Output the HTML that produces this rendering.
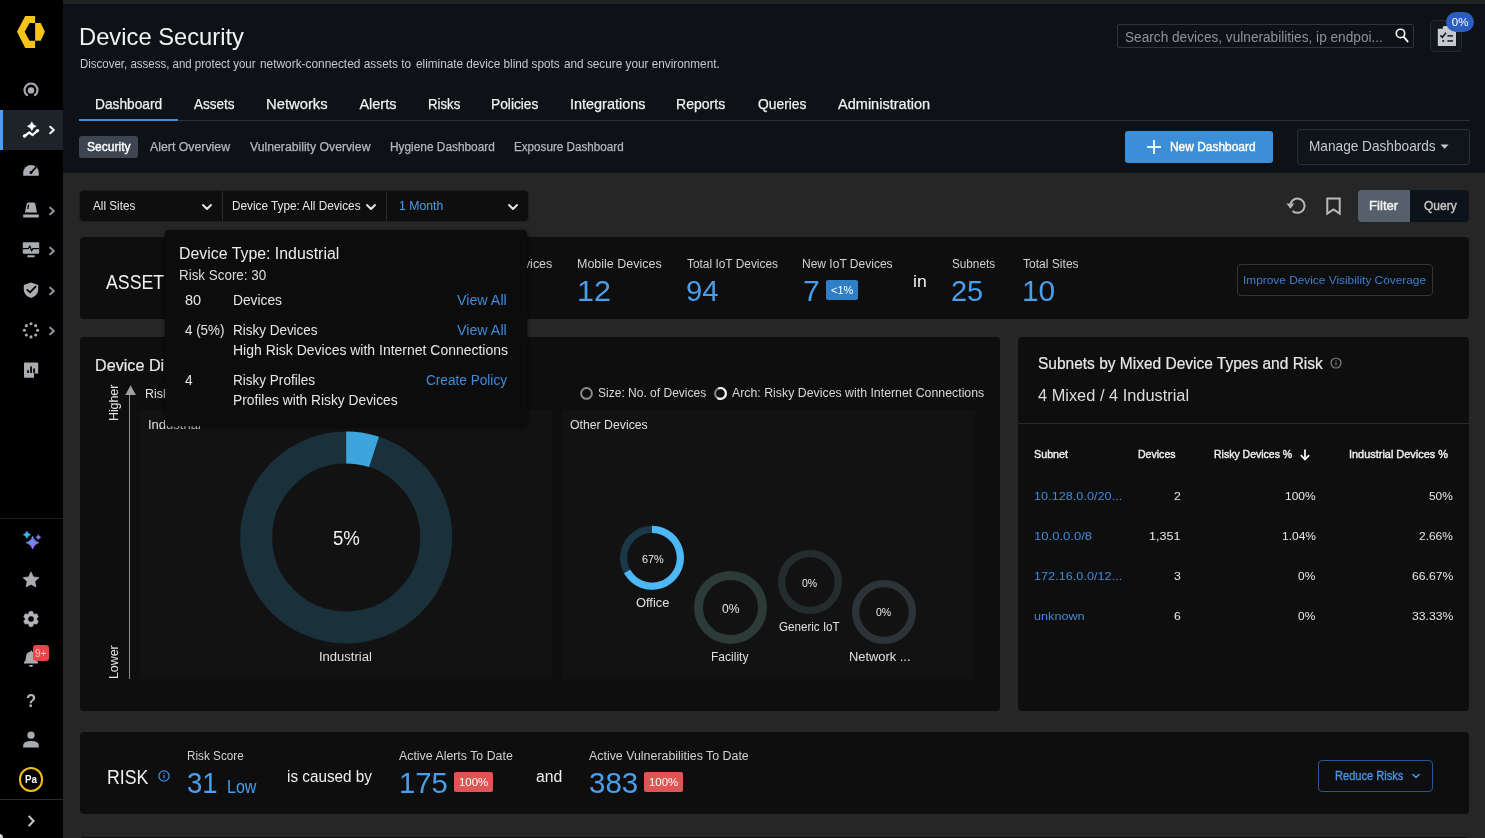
<!DOCTYPE html>
<html><head><meta charset="utf-8"><title>Device Security</title>
<style>
html,body{margin:0;padding:0;}
body{width:1485px;height:838px;overflow:hidden;background:#262626;font-family:"Liberation Sans",sans-serif;position:relative;}
.t{position:absolute;white-space:nowrap;line-height:1;display:block;transform-origin:0 0;}
.abs{position:absolute;}
.card{position:absolute;background:#0e0e0e;border-radius:4px;}
svg{position:absolute;overflow:visible;}
</style></head><body><div id="root" style="position:absolute;left:0;top:0;width:1485px;height:838px;will-change:transform">
<div class="abs" style="left:63px;top:0;width:1422px;height:4px;background:#222222"></div>
<div class="abs" style="left:63px;top:4px;width:1422px;height:169px;background:#0e1216"></div>
<div class="abs" style="left:0;top:0;width:63px;height:838px;background:#000"></div>
<div class="abs" style="left:0;top:110px;width:63px;height:40px;background:#1d2329"></div>
<div class="abs" style="left:0;top:110px;width:3px;height:40px;background:#4a9df8"></div>
<div class="abs" style="left:0;top:518px;width:63px;height:1px;background:#1f1f1f"></div>
<div class="abs" style="left:0;top:799px;width:63px;height:1px;background:#2a2a2a"></div>
<svg style="left:0;top:0" width="63" height="60" viewBox="0 0 63 60">
<polygon points="25.2,16 35.1,16 35.1,23 29.5,23 24.7,31.7 29.5,40.7 35.1,40.7 35.1,48 25.2,48 17,31.7" fill="#f4c417"/>
<polygon points="35.1,23 40.7,23 44.9,31.7 40.7,40.7 35.1,40.7" fill="#f4c417"/>
</svg>
<svg style="left:21px;top:80px" width="20" height="20" viewBox="-10 -10 20 20">
<path d="M -3.9 5.2 A 6.5 6.5 0 1 1 3.9 5.2" fill="none" stroke="#a9adb2" stroke-width="2.1" stroke-linecap="round"/>
<circle cx="0" cy="0.4" r="3.2" fill="#a9adb2"/></svg>
<svg style="left:19px;top:118px" width="24" height="24" viewBox="19 118 24 24">
<polyline points="24.6,136 29.3,132.5 32.6,135 37.5,130.6" fill="none" stroke="#fff" stroke-width="2.2" stroke-linecap="round" stroke-linejoin="round"/><circle cx="24.6" cy="136" r="1.8" fill="#fff"/><circle cx="37.5" cy="130.6" r="1.7" fill="#fff"/>
<path d="M31.80 121.70 Q32.79 125.21 36.30 126.20 Q32.79 127.19 31.80 130.70 Q30.81 127.19 27.30 126.20 Q30.81 125.21 31.80 121.70 Z" fill="#fff" stroke="#fff" stroke-width="0.5" stroke-linejoin="round"/>
</svg>
<svg style="left:46.1px;top:123.4px" width="12" height="14" viewBox="-6 -7 12 14"><polyline points="-1.81,-3.22 1.81,0 -1.81,3.22" fill="none" stroke="#f0f0f0" stroke-width="2.1" stroke-linecap="round" stroke-linejoin="round"/></svg>
<svg style="left:21px;top:161px" width="20" height="20" viewBox="21 161 20 20">
<path d="M23.2 175.8 L23.2 172.8 A 7.8 7.8 0 0 1 38.8 172.8 L38.8 175.8 Z" fill="#a9adb2"/>
<line x1="31" y1="172.6" x2="35.6" y2="167.6" stroke="#000" stroke-width="1.6" stroke-linecap="round"/>
<circle cx="31" cy="172.6" r="1.5" fill="#000"/>
</svg>
<svg style="left:21px;top:200px" width="20" height="20" viewBox="21 200 20 20">
<path d="M25 212.6 L26.6 204 Q26.9 202.4 28.5 202.4 L33.5 202.4 Q35.1 202.4 35.4 204 L37 212.6 Z" fill="#a9adb2"/>
<rect x="23.2" y="214.6" width="15.6" height="2.9" rx="0.6" fill="#a9adb2"/>
<line x1="28.6" y1="204.6" x2="27.8" y2="209" stroke="#000" stroke-width="1.3"/>
</svg>
<svg style="left:46.1px;top:203.5px" width="12" height="14" viewBox="-6 -7 12 14"><polyline points="-1.81,-3.22 1.81,0 -1.81,3.22" fill="none" stroke="#8f9398" stroke-width="2.1" stroke-linecap="round" stroke-linejoin="round"/></svg>
<svg style="left:21px;top:240px" width="20" height="20" viewBox="21 240 20 20">
<rect x="22.8" y="242.3" width="16.4" height="11.4" rx="1" fill="#a9adb2"/>
<rect x="27.4" y="255.2" width="7.2" height="2" rx="0.5" fill="#a9adb2"/>
<polyline points="23,248.6 28.5,248.6 29.8,246 31.6,251 32.8,248.6 39,248.6" fill="none" stroke="#000" stroke-width="1.2" stroke-linejoin="round"/>
</svg>
<svg style="left:46.1px;top:243.5px" width="12" height="14" viewBox="-6 -7 12 14"><polyline points="-1.81,-3.22 1.81,0 -1.81,3.22" fill="none" stroke="#8f9398" stroke-width="2.1" stroke-linecap="round" stroke-linejoin="round"/></svg>
<svg style="left:21px;top:280px" width="20" height="20" viewBox="21 280 20 20">
<path d="M31 282.4 L38.2 285 L38.2 290 Q38.2 295.2 31 297.9 Q23.8 295.2 23.8 290 L23.8 285 Z" fill="#a9adb2"/>
<polyline points="27.3,289.8 30,292.4 35.6,286.6" fill="none" stroke="#000" stroke-width="1.7" stroke-linecap="round" stroke-linejoin="round"/>
</svg>
<svg style="left:46.1px;top:283.5px" width="12" height="14" viewBox="-6 -7 12 14"><polyline points="-1.81,-3.22 1.81,0 -1.81,3.22" fill="none" stroke="#8f9398" stroke-width="2.1" stroke-linecap="round" stroke-linejoin="round"/></svg>
<svg style="left:21px;top:320px" width="20" height="20" viewBox="21 320 20 20"><circle cx="31.00" cy="323.70" r="1.55" fill="#a9adb2"/><circle cx="35.67" cy="325.63" r="1.55" fill="#a9adb2"/><circle cx="37.60" cy="330.30" r="1.55" fill="#a9adb2"/><circle cx="35.67" cy="334.97" r="1.55" fill="#a9adb2"/><circle cx="31.00" cy="336.90" r="1.55" fill="#a9adb2"/><circle cx="26.33" cy="334.97" r="1.55" fill="#a9adb2"/><circle cx="24.40" cy="330.30" r="1.55" fill="#a9adb2"/><circle cx="26.33" cy="325.63" r="1.55" fill="#a9adb2"/></svg>
<svg style="left:46.1px;top:323.5px" width="12" height="14" viewBox="-6 -7 12 14"><polyline points="-1.81,-3.22 1.81,0 -1.81,3.22" fill="none" stroke="#8f9398" stroke-width="2.1" stroke-linecap="round" stroke-linejoin="round"/></svg>
<svg style="left:21px;top:360px" width="20" height="20" viewBox="21 360 20 20">
<path d="M25 362.4 L37.2 362.4 Q38.2 362.4 38.2 363.4 L38.2 373.4 L34 373.4 L34 377.8 L25 377.8 Q24 377.8 24 376.8 L24 363.4 Q24 362.4 25 362.4 Z" fill="#a9adb2"/>
<rect x="27.2" y="370.2" width="1.7" height="2.8" fill="#000"/>
<rect x="30.2" y="366.4" width="1.7" height="6.6" fill="#000"/>
<rect x="33.2" y="368.4" width="1.7" height="4.6" fill="#000"/>
</svg>
<svg style="left:19px;top:527px" width="26" height="26" viewBox="19 527 26 26">
<defs><linearGradient id="sg" x1="0" y1="0" x2="0.6" y2="1"><stop offset="0" stop-color="#4aa8f5"/><stop offset="1" stop-color="#9a6af2"/></linearGradient></defs>
<path d="M32.60 536.20 Q33.90 541.40 39.10 542.70 Q33.90 544.00 32.60 549.20 Q31.30 544.00 26.10 542.70 Q31.30 541.40 32.60 536.20 Z" fill="url(#sg)" stroke="url(#sg)" stroke-width="0.6" stroke-linejoin="round"/>
<path d="M26.90 531.10 Q27.64 534.06 30.60 534.80 Q27.64 535.54 26.90 538.50 Q26.16 535.54 23.20 534.80 Q26.16 534.06 26.90 531.10 Z" fill="#3db6f2" stroke="#3db6f2" stroke-width="0.5" stroke-linejoin="round"/>
<path d="M38.40 534.60 Q38.92 536.68 41.00 537.20 Q38.92 537.72 38.40 539.80 Q37.88 537.72 35.80 537.20 Q37.88 536.68 38.40 534.60 Z" fill="#8b7df2" stroke="#8b7df2" stroke-width="0.4" stroke-linejoin="round"/>
</svg>
<svg style="left:21px;top:570px" width="20" height="20" viewBox="21 570 20 20"><polygon points="31.00,571.90 33.35,576.96 38.89,577.64 34.80,581.44 35.88,586.91 31.00,584.20 26.12,586.91 27.20,581.44 23.11,577.64 28.65,576.96" fill="#a9adb2" stroke="#a9adb2" stroke-width="0.8" stroke-linejoin="round"/></svg>
<svg style="left:21px;top:609px" width="20" height="20" viewBox="21 609 20 20"><polygon points="29.45,611.36 32.55,611.36 33.80,614.15 36.85,613.84 38.40,616.52 36.60,619.00 38.40,621.48 36.85,624.16 33.80,623.85 32.55,626.64 29.45,626.64 28.20,623.85 25.15,624.16 23.60,621.48 25.40,619.00 23.60,616.52 25.15,613.84 28.20,614.15" fill="#b0b4b9" stroke="#b0b4b9" stroke-width="0.4" stroke-linejoin="round"/><circle cx="31" cy="619" r="2.8" fill="#000"/></svg>
<svg style="left:19.7px;top:646.6px" width="22" height="24" viewBox="20 648 22 24">
<path d="M24 664.6 L24 663.6 Q26 662 26 658 Q26 653.6 30.6 652.6 L30.6 651.8 L32 651.8 L32 652.6 Q36 653.6 36 658 Q36 662 38 663.6 L38 664.6 Z" fill="#a9adb2"/>
<path d="M29 666 L33 666 Q33 668 31 668 Q29 668 29 666 Z" fill="#a9adb2"/>
</svg>
<div class="abs" style="left:33.1px;top:645.1px;width:15.5px;height:15.9px;border-radius:3px;background:#e7474b"></div>
<span class="t" style="left:35.30px;top:648px;font-size:10.5px;color:#f6c4c5;transform:scaleX(0.9629);">9+</span>
<span class="t" style="left:25.90px;top:691px;font-size:19px;color:#b2b4b7;font-weight:700;transform:scaleX(0.8727);">?</span>
<svg style="left:21px;top:730px" width="20" height="20" viewBox="21 730 20 20">
<circle cx="31" cy="735.2" r="3.6" fill="#a9adb2"/>
<path d="M23.2 747.6 L23.2 745.6 Q23.2 741 31 741 Q38.8 741 38.8 745.6 L38.8 747.6 Z" fill="#a9adb2"/></svg>
<div class="abs" style="left:19.1px;top:767.3px;width:20.4px;height:20.4px;border-radius:50%;border:2px solid #f0bf12"></div>
<span class="t" style="left:24.85px;top:774px;font-size:11.5px;color:#fff;font-weight:700;transform:scaleX(0.8521);">Pa</span>
<svg style="left:25.3px;top:813.6px" width="12" height="14" viewBox="-6 -7 12 14"><polyline points="-2.3,-5.1 2.5,0 -2.3,5.1" fill="none" stroke="#c4c6c9" stroke-width="2.1" stroke-linecap="butt" stroke-linejoin="miter"/></svg>
<div class="abs" style="left:-4px;top:834px;width:7px;height:8px;border-radius:50%;background:#d4d8dc"></div>
<span class="t" style="left:78.61px;top:25px;font-size:24px;color:#f2f2f2;transform:scaleX(0.9896);">Device Security</span>
<span class="t" style="left:80.00px;top:58px;font-size:12px;color:#c6c9cd;transform:scaleX(0.9568);">Discover, assess, and protect your</span>
<span class="t" style="left:259.70px;top:58px;font-size:12px;color:#c6c9cd;transform:scaleX(0.9897);">network-connected assets to</span>
<span class="t" style="left:415.50px;top:58px;font-size:12px;color:#c6c9cd;transform:scaleX(0.9792);">eliminate device blind spots</span>
<span class="t" style="left:563.50px;top:58px;font-size:12px;color:#c6c9cd;transform:scaleX(0.9809);">and secure your environment.</span>
<div class="abs" style="left:79px;top:120px;width:1391px;height:1px;background:#2b3139"></div>
<div class="abs" style="left:79px;top:118.5px;width:99px;height:2.5px;background:#3b8de0"></div>
<span class="t" style="left:94.65px;top:97px;font-size:14.5px;color:#f0f0f0;-webkit-text-stroke:0.25px #f0f0f0;transform:scaleX(0.9475);">Dashboard</span>
<span class="t" style="left:194.00px;top:97px;font-size:14.5px;color:#f0f0f0;-webkit-text-stroke:0.25px #f0f0f0;transform:scaleX(0.9338);">Assets</span>
<span class="t" style="left:265.98px;top:97px;font-size:14.5px;color:#f0f0f0;-webkit-text-stroke:0.25px #f0f0f0;transform:scaleX(1.0206);">Networks</span>
<span class="t" style="left:359.40px;top:97px;font-size:14.5px;color:#f0f0f0;-webkit-text-stroke:0.25px #f0f0f0;">Alerts</span>
<span class="t" style="left:427.69px;top:97px;font-size:14.5px;color:#f0f0f0;-webkit-text-stroke:0.25px #f0f0f0;transform:scaleX(0.9125);">Risks</span>
<span class="t" style="left:491.45px;top:97px;font-size:14.5px;color:#f0f0f0;-webkit-text-stroke:0.25px #f0f0f0;transform:scaleX(0.9484);">Policies</span>
<span class="t" style="left:570.00px;top:97px;font-size:14.5px;color:#f0f0f0;-webkit-text-stroke:0.25px #f0f0f0;transform:scaleX(0.9957);">Integrations</span>
<span class="t" style="left:676.43px;top:97px;font-size:14.5px;color:#f0f0f0;-webkit-text-stroke:0.25px #f0f0f0;transform:scaleX(0.9693);">Reports</span>
<span class="t" style="left:757.60px;top:97px;font-size:14.5px;color:#f0f0f0;-webkit-text-stroke:0.25px #f0f0f0;transform:scaleX(0.9541);">Queries</span>
<span class="t" style="left:838.00px;top:97px;font-size:14.5px;color:#f0f0f0;-webkit-text-stroke:0.25px #f0f0f0;transform:scaleX(1.0021);">Administration</span>
<div class="abs" style="left:79px;top:136px;width:59px;height:22px;border-radius:3px;background:#3d4650"></div>
<span class="t" style="left:86.60px;top:141px;font-size:12px;color:#fff;-webkit-text-stroke:0.4px #fff;transform:scaleX(1.0035);">Security</span>
<span class="t" style="left:149.80px;top:141px;font-size:12px;color:#b4b8bd;-webkit-text-stroke:0.25px #b4b8bd;transform:scaleX(1.0261);">Alert Overview</span>
<span class="t" style="left:249.60px;top:141px;font-size:12px;color:#b4b8bd;-webkit-text-stroke:0.25px #b4b8bd;transform:scaleX(1.0186);">Vulnerability Overview</span>
<span class="t" style="left:390.00px;top:141px;font-size:12px;color:#b4b8bd;-webkit-text-stroke:0.25px #b4b8bd;transform:scaleX(0.9887);">Hygiene Dashboard</span>
<span class="t" style="left:514.00px;top:141px;font-size:12px;color:#b4b8bd;-webkit-text-stroke:0.25px #b4b8bd;transform:scaleX(0.9727);">Exposure Dashboard</span>
<div class="abs" style="left:1117px;top:24px;width:295px;height:22px;border:1px solid #30353b;border-radius:2px;background:#0e1216"></div>
<span class="t" style="left:1124.60px;top:30px;font-size:14px;color:#8d9399;transform:scaleX(0.9746);">Search devices, vulnerabilities, ip endpoi...</span>
<svg style="left:1393px;top:27px" width="18" height="18" viewBox="1393 27 18 18">
<circle cx="1400.5" cy="33.4" r="4.2" fill="none" stroke="#f4f4f4" stroke-width="1.6"/>
<line x1="1403.8" y1="36.8" x2="1407.6" y2="41.4" stroke="#f4f4f4" stroke-width="1.9" stroke-linecap="round"/></svg>
<div class="abs" style="left:1430px;top:20.2px;width:30px;height:29.6px;border:1px solid #262b32;border-radius:4px;background:#12171d"></div>
<svg style="left:1436px;top:24px" width="22" height="24" viewBox="1436 24 22 24">
<path d="M1438.4 28.7 L1442.6 28.7 L1443.4 26 L1450.4 26 L1451.2 28.7 L1455.4 28.7 Q1456 28.7 1456 29.3 L1456 45.4 Q1456 46 1455.4 46 L1438.4 46 Q1437.8 46 1437.8 45.4 L1437.8 29.3 Q1437.8 28.7 1438.4 28.7 Z" fill="#c6c9cd"/>
<polyline points="1440.4,35.4 1442.3,37.3 1446,32.8" fill="none" stroke="#12171d" stroke-width="1.5"/>
<circle cx="1443.2" cy="41" r="1.05" fill="#12171d"/>
<rect x="1447.4" y="35.1" width="5.6" height="1.5" fill="#12171d"/>
<rect x="1447.4" y="40.2" width="5.6" height="1.5" fill="#12171d"/>
</svg>
<div class="abs" style="left:1446px;top:11.9px;width:28px;height:20.3px;border-radius:10.2px;background:#295ec0"></div>
<span class="t" style="left:1451.80px;top:17px;font-size:11.5px;color:#fff;">0%</span>
<div class="abs" style="left:1125px;top:131px;width:148px;height:32px;border-radius:3px;background:#3b8fd8"></div>
<svg style="left:1145px;top:138px" width="18" height="18" viewBox="1145 138 18 18">
<line x1="1147" y1="147" x2="1161" y2="147" stroke="#fff" stroke-width="1.8"/><line x1="1154" y1="140" x2="1154" y2="154" stroke="#fff" stroke-width="1.8"/></svg>
<span class="t" style="left:1169.85px;top:141px;font-size:12.5px;color:#fff;-webkit-text-stroke:0.4px #fff;transform:scaleX(0.9540);">New Dashboard</span>
<div class="abs" style="left:1297px;top:129px;width:171px;height:34px;border:1px solid #2a3038;border-radius:3px;background:#10151b"></div>
<span class="t" style="left:1308.66px;top:139px;font-size:14.5px;color:#c6c9cd;transform:scaleX(0.9410);">Manage Dashboards</span>
<svg style="left:1440px;top:143.5px" width="10" height="6" viewBox="0 0 10 6"><polygon points="0.6,0.6 8.6,0.6 4.6,4.8" fill="#c6c9cd"/></svg>
<div class="abs" style="left:79.5px;top:190.5px;width:448.5px;height:30.5px;border-radius:4px;background:#0e0e0e;box-shadow:0 0 0 1px #1d1d1d"></div>
<div class="abs" style="left:222px;top:191px;width:1px;height:30px;background:#2a2a2a"></div>
<div class="abs" style="left:386px;top:191px;width:1px;height:30px;background:#2a2a2a"></div>
<span class="t" style="left:93.00px;top:200px;font-size:12.5px;color:#e8e8e8;transform:scaleX(0.9353);">All Sites</span>
<span class="t" style="left:231.86px;top:200px;font-size:12.5px;color:#e8e8e8;transform:scaleX(0.9406);">Device Type: All Devices</span>
<span class="t" style="left:399.40px;top:200px;font-size:12.5px;color:#4a9eea;transform:scaleX(0.9820);">1 Month</span>
<svg style="left:201px;top:203px" width="12" height="8" viewBox="-6 -4 12 8"><polyline points="-4,-2 0,2 4,-2" fill="none" stroke="#e8e8e8" stroke-width="1.9" stroke-linecap="round" stroke-linejoin="round"/></svg>
<svg style="left:365.4px;top:203px" width="12" height="8" viewBox="-6 -4 12 8"><polyline points="-4,-2 0,2 4,-2" fill="none" stroke="#e8e8e8" stroke-width="1.9" stroke-linecap="round" stroke-linejoin="round"/></svg>
<svg style="left:507px;top:203px" width="12" height="8" viewBox="-6 -4 12 8"><polyline points="-4,-2 0,2 4,-2" fill="none" stroke="#e8e8e8" stroke-width="1.9" stroke-linecap="round" stroke-linejoin="round"/></svg>
<svg style="left:1283px;top:193px" width="26" height="26" viewBox="1283 193 26 26">
<path d="M1290.4 206.6 A 7.1 7.1 0 1 1 1292.6 210.9" fill="none" stroke="#b6b6b6" stroke-width="2" stroke-linecap="butt"/>
<polygon points="1286.4,203.6 1294.4,203.6 1290.4,208.8" fill="#b6b6b6"/></svg>
<svg style="left:1323px;top:194px" width="20" height="24" viewBox="1323 194 20 24">
<path d="M1327.3 198.5 L1339.7 198.5 L1339.7 213.6 L1333.5 209.4 L1327.3 213.6 Z" fill="none" stroke="#bababa" stroke-width="2" stroke-linejoin="miter"/></svg>
<div class="abs" style="left:1358px;top:190px;width:52.2px;height:32px;border-radius:4px 0 0 4px;background:#55606c"></div>
<div class="abs" style="left:1410.2px;top:190px;width:58.4px;height:32px;border-radius:0 4px 4px 0;background:#0d131a"></div>
<span class="t" style="left:1369.35px;top:200px;font-size:12.5px;color:#f4f4f4;-webkit-text-stroke:0.4px #f4f4f4;transform:scaleX(1.0521);">Filter</span>
<span class="t" style="left:1423.60px;top:200px;font-size:12.5px;color:#c6c6c6;-webkit-text-stroke:0.4px #c6c6c6;transform:scaleX(0.9601);">Query</span>
<div class="card" style="left:80px;top:237px;width:1389px;height:82px"></div>
<span class="t" style="left:106.00px;top:272px;font-size:20px;color:#f0f0f0;transform:scaleX(0.8874);">ASSET</span>
<span class="t" style="left:508.40px;top:258px;font-size:12.5px;color:#d2d2d2;transform:scaleX(0.9952);">Devices</span>
<span class="t" style="left:577.00px;top:258px;font-size:12.5px;color:#d2d2d2;transform:scaleX(0.9988);">Mobile Devices</span>
<span class="t" style="left:576.70px;top:277px;font-size:29px;color:#4a9eea;transform:scaleX(1.0505);">12</span>
<span class="t" style="left:686.60px;top:258px;font-size:12.5px;color:#d2d2d2;transform:scaleX(0.9517);">Total IoT Devices</span>
<span class="t" style="left:686.39px;top:277px;font-size:29px;color:#4a9eea;transform:scaleX(1.0087);">94</span>
<span class="t" style="left:802.44px;top:258px;font-size:12.5px;color:#d2d2d2;transform:scaleX(0.9612);">New IoT Devices</span>
<span class="t" style="left:803.16px;top:277px;font-size:29px;color:#4a9eea;transform:scaleX(1.0429);">7</span>
<div class="abs" style="left:826px;top:280px;width:32px;height:20px;border-radius:2px;background:#2f7fc6"></div>
<span class="t" style="left:831.20px;top:285px;font-size:11.5px;color:#fff;transform:scaleX(0.9519);">&lt;1%</span>
<span class="t" style="left:912.90px;top:274px;font-size:16px;color:#f0f0f0;transform:scaleX(1.0990);">in</span>
<span class="t" style="left:951.60px;top:258px;font-size:12.5px;color:#d2d2d2;transform:scaleX(0.9382);">Subnets</span>
<span class="t" style="left:951.40px;top:277px;font-size:29px;color:#4a9eea;transform:scaleX(0.9957);">25</span>
<span class="t" style="left:1023.00px;top:258px;font-size:12.5px;color:#d2d2d2;transform:scaleX(0.9649);">Total Sites</span>
<span class="t" style="left:1021.74px;top:277px;font-size:29px;color:#4a9eea;transform:scaleX(1.0299);">10</span>
<div class="abs" style="left:1237px;top:264px;width:193.5px;height:29.5px;border:1px solid #333639;border-radius:4px"></div>
<span class="t" style="left:1242.87px;top:275px;font-size:11.5px;color:#3b7ed2;transform:scaleX(1.0314);">Improve Device Visibility Coverage</span>
<div class="card" style="left:80px;top:337px;width:920px;height:374px"></div>
<span class="t" style="left:95.39px;top:358px;font-size:16px;color:#e8e8e8;-webkit-text-stroke:0.2px #e8e8e8;transform:scaleX(1.0104);">Device Di</span>
<span class="t" style="left:165.40px;top:358px;font-size:16px;color:#e8e8e8;transform:scaleX(0.9840);">stribution</span>
<div class="abs" style="left:129.2px;top:392px;width:1px;height:287px;background:#8c8c8c"></div>
<svg style="left:124.6px;top:384.8px" width="12" height="11" viewBox="0 0 12 11"><polygon points="5.6,0.2 10.9,10 0.3,10" fill="#a0a0a0"/></svg>
<span class="t" style="left:144.60px;top:388px;font-size:12.5px;color:#e0e0e0;transform:scaleX(0.9977);">Risk</span>
<div class="abs" style="left:108.2px;top:420.6px;width:36px;height:12px;transform-origin:0 0;transform:rotate(-90deg);font-size:12.5px;line-height:12px;color:#e4e4e4;white-space:nowrap;letter-spacing:-0.1px">Higher</div>
<div class="abs" style="left:108.2px;top:678.6px;width:34px;height:12px;transform-origin:0 0;transform:rotate(-90deg);font-size:12.5px;line-height:12px;color:#e4e4e4;white-space:nowrap;letter-spacing:-0.1px">Lower</div>
<div class="abs" style="left:140.3px;top:409.8px;width:412px;height:268.8px;background:#121212"></div>
<div class="abs" style="left:562.3px;top:409.8px;width:412.3px;height:268.8px;background:#121212"></div>
<span class="t" style="left:147.76px;top:419px;font-size:12.5px;color:#e0e0e0;transform:scaleX(1.0420);">Industrial</span>
<span class="t" style="left:570.00px;top:419px;font-size:12.5px;color:#e0e0e0;transform:scaleX(0.9817);">Other Devices</span>
<svg style="left:579px;top:386px" width="15" height="15" viewBox="-7.5 -7.5 15 15"><circle cx="0" cy="-0.1" r="5.4" fill="none" stroke="#8c8c8c" stroke-width="1.9"/></svg>
<span class="t" style="left:597.60px;top:387px;font-size:12.5px;color:#d8d8d8;transform:scaleX(0.9618);">Size: No. of Devices</span>
<svg style="left:712.9px;top:386px" width="15" height="15" viewBox="-7.5 -7.5 15 15">
<circle cx="0" cy="-0.1" r="5.4" fill="none" stroke="#8c8c8c" stroke-width="1.9"/>
<path d="M -2.2 -5 A 5.4 5.4 0 1 1 -3.2 4.3" fill="none" stroke="#f4f4f4" stroke-width="2.1"/></svg>
<span class="t" style="left:731.60px;top:387px;font-size:12.5px;color:#d8d8d8;transform:scaleX(0.9867);">Arch: Risky Devices with Internet Connections</span>
<svg style="left:0;top:0" width="1485" height="838" viewBox="0 0 1485 838">
<circle cx="346.2" cy="537.5" r="90" fill="none" stroke="#1a313b" stroke-width="32"/>
<path d="M346.20 431.50 A106 106 0 0 1 378.96 436.69 L369.07 467.12 A74 74 0 0 0 346.20 463.50 Z" fill="#3da5db"/>
<circle cx="652" cy="557.8" r="28.4" fill="none" stroke="#1b3848" stroke-width="7.2"/>
<path d="M652.00 525.80 A32 32 0 1 1 624.01 573.31 L630.31 569.82 A24.8 24.8 0 1 0 652.00 533.00 Z" fill="#4cb9f6"/>
<circle cx="730.5" cy="607.5" r="32" fill="none" stroke="#2c3b38" stroke-width="9"/>
<circle cx="810" cy="582" r="28.35" fill="none" stroke="#252c2d" stroke-width="7.4"/>
<circle cx="884" cy="612" r="28.35" fill="none" stroke="#2d3337" stroke-width="7.4"/>
</svg>
<span class="t" style="left:333.10px;top:529px;font-size:19.5px;color:#f0f0f0;transform:scaleX(0.9553);">5%</span>
<span class="t" style="left:319.46px;top:651px;font-size:12.5px;color:#e0e0e0;transform:scaleX(1.0420);">Industrial</span>
<span class="t" style="left:641.60px;top:554px;font-size:11px;color:#e8e8e8;transform:scaleX(0.9894);">67%</span>
<span class="t" style="left:635.70px;top:597px;font-size:12.5px;color:#e0e0e0;transform:scaleX(1.0286);">Office</span>
<span class="t" style="left:722.00px;top:603px;font-size:12.5px;color:#e8e8e8;transform:scaleX(0.9693);">0%</span>
<span class="t" style="left:711.44px;top:651px;font-size:12.5px;color:#e0e0e0;transform:scaleX(0.9627);">Facility</span>
<span class="t" style="left:802.00px;top:578px;font-size:11px;color:#e8e8e8;transform:scaleX(0.9555);">0%</span>
<span class="t" style="left:778.70px;top:621px;font-size:12.5px;color:#e0e0e0;transform:scaleX(0.9289);">Generic IoT</span>
<span class="t" style="left:876.00px;top:607px;font-size:11px;color:#e8e8e8;transform:scaleX(0.9555);">0%</span>
<span class="t" style="left:848.97px;top:651px;font-size:12.5px;color:#e0e0e0;transform:scaleX(1.0298);">Network ...</span>
<div class="card" style="left:1018px;top:337px;width:451px;height:374px"></div>
<span class="t" style="left:1038.20px;top:356px;font-size:16px;color:#e8e8e8;-webkit-text-stroke:0.2px #e8e8e8;transform:scaleX(0.9683);">Subnets by Mixed Device Types and Risk</span>
<svg style="left:1330.1px;top:356.9px" width="12" height="12" viewBox="-6 -6 12 12"><circle r="5" fill="none" stroke="#8a8a8a" stroke-width="1.15"/><rect x="-0.5" y="-1" width="1" height="3.4" fill="#8a8a8a"/><rect x="-0.5" y="-2.8" width="1" height="1" fill="#8a8a8a"/></svg>
<span class="t" style="left:1038.20px;top:388px;font-size:16px;color:#dcdcdc;transform:scaleX(1.0233);">4 Mixed / 4 Industrial</span>
<div class="abs" style="left:1018px;top:423px;width:451px;height:1px;background:#2a2a2a"></div>
<span class="t" style="left:1034.00px;top:449px;font-size:11px;color:#f0f0f0;-webkit-text-stroke:0.4px #f0f0f0;transform:scaleX(0.9768);">Subnet</span>
<span class="t" style="left:1138.00px;top:449px;font-size:11px;color:#f0f0f0;-webkit-text-stroke:0.4px #f0f0f0;transform:scaleX(0.9590);">Devices</span>
<span class="t" style="left:1214.40px;top:449px;font-size:11px;color:#f0f0f0;-webkit-text-stroke:0.4px #f0f0f0;transform:scaleX(0.9547);">Risky Devices %</span>
<svg style="left:1299.1px;top:447.5px" width="12" height="13" viewBox="-6 -6.5 12 13"><line x1="0" y1="-5" x2="0" y2="4.6" stroke="#f0f0f0" stroke-width="1.8"/><polyline points="-4.2,0.6 0,4.9 4.2,0.6" fill="none" stroke="#f0f0f0" stroke-width="1.8"/></svg>
<span class="t" style="left:1348.61px;top:449px;font-size:11px;color:#f0f0f0;-webkit-text-stroke:0.4px #f0f0f0;transform:scaleX(0.9932);">Industrial Devices %</span>
<span class="t" style="left:1034.00px;top:491px;font-size:11.5px;color:#3f8bdc;transform:scaleX(1.1037);">10.128.0.0/20...</span>
<span class="t" style="left:1173.60px;top:491px;font-size:11.5px;color:#e8e8e8;transform:scaleX(1.0667);">2</span>
<span class="t" style="left:1285.00px;top:491px;font-size:11.5px;color:#e8e8e8;transform:scaleX(1.0416);">100%</span>
<span class="t" style="left:1429.20px;top:491px;font-size:11.5px;color:#e8e8e8;transform:scaleX(1.0355);">50%</span>
<span class="t" style="left:1034.00px;top:531px;font-size:11.5px;color:#3f8bdc;transform:scaleX(1.1348);">10.0.0.0/8</span>
<span class="t" style="left:1149.00px;top:531px;font-size:11.5px;color:#e8e8e8;transform:scaleX(1.0922);">1,351</span>
<span class="t" style="left:1281.60px;top:531px;font-size:11.5px;color:#e8e8e8;transform:scaleX(1.0438);">1.04%</span>
<span class="t" style="left:1419.20px;top:531px;font-size:11.5px;color:#e8e8e8;transform:scaleX(1.0376);">2.66%</span>
<span class="t" style="left:1034.00px;top:571px;font-size:11.5px;color:#3f8bdc;transform:scaleX(1.1037);">172.16.0.0/12...</span>
<span class="t" style="left:1173.60px;top:571px;font-size:11.5px;color:#e8e8e8;transform:scaleX(1.0667);">3</span>
<span class="t" style="left:1298.40px;top:571px;font-size:11.5px;color:#e8e8e8;transform:scaleX(1.0369);">0%</span>
<span class="t" style="left:1411.80px;top:571px;font-size:11.5px;color:#e8e8e8;transform:scaleX(1.0573);">66.67%</span>
<span class="t" style="left:1034.00px;top:611px;font-size:11.5px;color:#3f8bdc;transform:scaleX(1.1000);">unknown</span>
<span class="t" style="left:1173.60px;top:611px;font-size:11.5px;color:#e8e8e8;transform:scaleX(1.0667);">6</span>
<span class="t" style="left:1298.40px;top:611px;font-size:11.5px;color:#e8e8e8;transform:scaleX(1.0369);">0%</span>
<span class="t" style="left:1411.80px;top:611px;font-size:11.5px;color:#e8e8e8;transform:scaleX(1.0573);">33.33%</span>
<div class="card" style="left:80px;top:732px;width:1389px;height:81.5px"></div>
<span class="t" style="left:107.12px;top:767px;font-size:20px;color:#f0f0f0;transform:scaleX(0.8848);">RISK</span>
<svg style="left:158.2px;top:770px" width="12" height="12" viewBox="-6 -6 12 12"><circle r="5.1" fill="none" stroke="#3f8bdc" stroke-width="1.3"/><rect x="-0.6" y="-1" width="1.2" height="3.4" fill="#3f8bdc"/><rect x="-0.6" y="-3" width="1.2" height="1.2" fill="#3f8bdc"/></svg>
<span class="t" style="left:186.66px;top:750px;font-size:12.5px;color:#d2d2d2;transform:scaleX(0.9381);">Risk Score</span>
<span class="t" style="left:187.45px;top:769px;font-size:29px;color:#4a9eea;transform:scaleX(0.9493);">31</span>
<span class="t" style="left:226.71px;top:778px;font-size:18px;color:#4a9eea;transform:scaleX(0.8903);">Low</span>
<span class="t" style="left:286.64px;top:769px;font-size:16px;color:#f0f0f0;transform:scaleX(0.9552);">is caused by</span>
<span class="t" style="left:398.80px;top:750px;font-size:12.5px;color:#d2d2d2;transform:scaleX(0.9883);">Active Alerts To Date</span>
<span class="t" style="left:398.58px;top:769px;font-size:29px;color:#4a9eea;transform:scaleX(1.0076);">175</span>
<div class="abs" style="left:454.2px;top:772.3px;width:38.8px;height:20px;border-radius:2px;background:#df5454"></div>
<span class="t" style="left:459.10px;top:777px;font-size:11.5px;color:#fff;transform:scaleX(0.9936);">100%</span>
<span class="t" style="left:535.90px;top:769px;font-size:16px;color:#f0f0f0;transform:scaleX(0.9846);">and</span>
<span class="t" style="left:588.70px;top:750px;font-size:12.5px;color:#d2d2d2;transform:scaleX(0.9909);">Active Vulnerabilities To Date</span>
<span class="t" style="left:588.58px;top:769px;font-size:29px;color:#4a9eea;transform:scaleX(1.0161);">383</span>
<div class="abs" style="left:644px;top:772.3px;width:38.8px;height:20px;border-radius:2px;background:#df5454"></div>
<span class="t" style="left:648.90px;top:777px;font-size:11.5px;color:#fff;transform:scaleX(0.9936);">100%</span>
<div class="abs" style="left:1318px;top:760px;width:112.8px;height:30px;border:1px solid #2256a2;border-radius:4px"></div>
<span class="t" style="left:1335.40px;top:770px;font-size:12px;color:#4a95e6;-webkit-text-stroke:0.35px #4a95e6;transform:scaleX(0.9240);">Reduce Risks</span>
<svg style="left:1409.8px;top:772.4px" width="12" height="8" viewBox="-6 -4 12 8"><polyline points="-3,-1.5 0,1.5 3,-1.5" fill="none" stroke="#4a95e6" stroke-width="1.6" stroke-linecap="round" stroke-linejoin="round"/></svg>
<div class="card" style="left:80px;top:836.5px;width:1389px;height:10px"></div>
<div class="abs" style="left:165px;top:230px;width:362px;height:196px;border-radius:4px;background:#0c0c0c;box-shadow:0 1px 4px rgba(0,0,0,0.7)"></div>
<span class="t" style="left:179.01px;top:246px;font-size:16px;color:#ececec;transform:scaleX(0.9919);">Device Type: Industrial</span>
<span class="t" style="left:179.04px;top:268px;font-size:14px;color:#dcdcdc;transform:scaleX(0.9574);">Risk Score: 30</span>
<span class="t" style="left:185.00px;top:293px;font-size:14px;color:#e6e6e6;transform:scaleX(1.0389);">80</span>
<span class="t" style="left:232.62px;top:293px;font-size:14px;color:#e6e6e6;transform:scaleX(0.9837);">Devices</span>
<span class="t" style="left:457.00px;top:293px;font-size:14px;color:#3f8bdc;transform:scaleX(1.0196);">View All</span>
<span class="t" style="left:185.00px;top:323px;font-size:14px;color:#e6e6e6;transform:scaleX(0.9563);">4 (5%)</span>
<span class="t" style="left:232.64px;top:323px;font-size:14px;color:#e6e6e6;transform:scaleX(0.9620);">Risky Devices</span>
<span class="t" style="left:457.00px;top:323px;font-size:14px;color:#3f8bdc;transform:scaleX(1.0196);">View All</span>
<span class="t" style="left:232.60px;top:343px;font-size:14px;color:#e6e6e6;transform:scaleX(0.9983);">High Risk Devices with Internet Connections</span>
<span class="t" style="left:185.00px;top:373px;font-size:14px;color:#e6e6e6;transform:scaleX(0.9750);">4</span>
<span class="t" style="left:232.63px;top:373px;font-size:14px;color:#e6e6e6;transform:scaleX(0.9667);">Risky Profiles</span>
<span class="t" style="left:426.40px;top:373px;font-size:14px;color:#3f8bdc;transform:scaleX(0.9729);">Create Policy</span>
<span class="t" style="left:232.62px;top:393px;font-size:14px;color:#e6e6e6;transform:scaleX(0.9840);">Profiles with Risky Devices</span>
</div></body></html>
